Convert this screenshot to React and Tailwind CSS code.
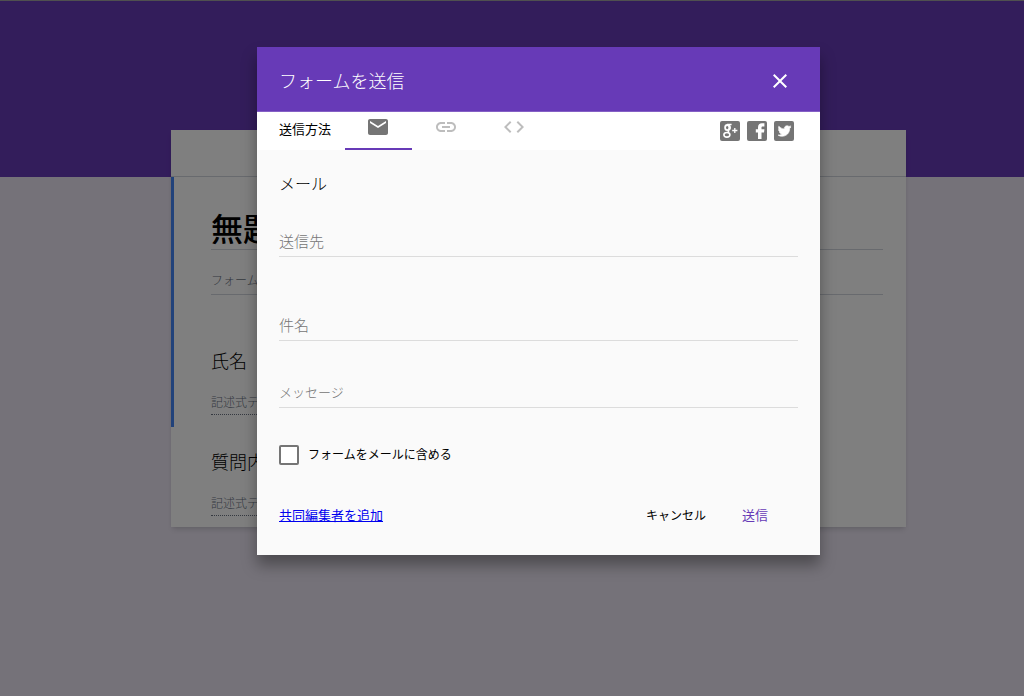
import { MdEmail, MdLink, MdCode, MdClose } from 'react-icons/md';

const GooglePlusIcon = () => (
  <svg viewBox="0 0 20 20" className="h-5 w-5">
    <rect width="20" height="20" rx="2" fill="#757575" />
    <g fill="none" stroke="#fff">
      <ellipse cx="7.2" cy="6.6" rx="2.1" ry="2.6" strokeWidth="1.8" />
      <path d="M7 3.4H11.6M9.2 4.4C10.8 6 10.4 7.8 9 8.9C7.8 9.8 8 10.4 9 11.2" strokeWidth="1.5" />
      <ellipse cx="6.9" cy="13.8" rx="3" ry="2.3" strokeWidth="1.6" />
      <path d="M14.8 6.9V12.1M12.2 9.5H17.4" strokeWidth="1.3" />
    </g>
  </svg>
);

const FacebookIcon = () => (
  <svg viewBox="0 0 20 20" className="h-5 w-5">
    <rect width="20" height="20" rx="2" fill="#757575" />
    <path
      d="M17.4 2.3V5.5H15.8C14.8 5.5 14.5 6 14.5 6.8V8.3H17.4L17 11.6H14.5V18H11V11.6H8.8V8.3H11V6.3C11 3.7 12.6 2.2 15 2.2Z"
      fill="#fff"
    />
  </svg>
);

const TwitterIcon = () => (
  <svg viewBox="2 2 20 20" className="h-5 w-5">
    <rect x="2" y="2" width="20" height="20" rx="2" fill="#757575" />
    <path
      d="M17.71 9.33C17.64 13.95 14.69 17.11 10.28 17.31C8.46 17.39 7.15 16.81 6 16.08C7.34 16.29 9 15.76 9.9 15C8.58 14.86 7.81 14.19 7.44 13.12C7.82 13.18 8.22 13.16 8.58 13.09C7.39 12.69 6.54 11.95 6.5 10.41C6.83 10.57 7.18 10.71 7.64 10.74C6.75 10.23 6.1 8.38 6.85 7.16C8.17 8.61 9.76 9.79 12.37 9.95C11.71 7.15 15.42 5.63 16.97 7.5C17.63 7.38 18.16 7.14 18.68 6.86C18.47 7.5 18.06 7.97 17.56 8.33C18.1 8.26 18.59 8.13 19 7.92C18.75 8.45 18.19 8.93 17.71 9.33Z"
      fill="#fff"
      stroke="#fff"
      strokeWidth="0.6"
    />
  </svg>
);

const Question = ({ title }) => (
  <div>
    <h2 className="text-lg leading-7">{title}</h2>
    <p className="mt-4 w-1/2 border-b border-dotted border-gray-500 text-xs leading-6 text-gray-500">
      記述式テキスト
    </p>
  </div>
);

const FormEditor = () => (
  <div className="min-h-screen border-t border-[#a0a0a0] bg-[#ebe5f3]">
    <div className="h-44 bg-[#673ab7]" />
    <div className="-mt-[47px] pl-[53px]">
      <main className="mx-auto w-full max-w-[735px] bg-white pb-[11px] shadow-md">
        <div className="h-[47px] border-b border-gray-300" />
        <div className="h-[250px] border-l-[3px] border-[#4285f4] pl-[37px] pr-[23px] pt-7">
          <h1 className="border-b border-gray-300 text-[32px] font-medium leading-[44px]">無題のフォーム</h1>
          <p className="mt-4 border-b border-gray-300 text-xs leading-7 text-gray-500">フォームの説明</p>
          <div className="pt-[51px]">
            <Question title="氏名" />
          </div>
        </div>
        <div className="pl-10 pr-[23px] pt-5">
          <Question title="質問内容" />
        </div>
      </main>
    </div>
  </div>
);

const Field = ({ label, className }) => (
  <input
    type="text"
    aria-label={label}
    placeholder={label}
    className={`block h-7 w-full border-b border-[#dcdcdc] bg-transparent pb-1 placeholder:text-[#757575] focus:outline-none ${className}`}
  />
);

const SendDialog = () => (
  <section
    role="dialog"
    aria-label="フォームを送信"
    className="mx-auto w-full max-w-[563px] bg-[#fafafa] shadow-[0_10px_14px_rgba(0,0,0,0.35)]"
  >
    <header className="flex h-[65px] items-center justify-between border-b border-[#8560c5] bg-[#673ab7] pl-[22px] pr-7 text-white">
      <h2 className="pt-0.5 text-lg">フォームを送信</h2>
      <button type="button" aria-label="閉じる" className="pt-1">
        <MdClose className="h-6 w-6" />
      </button>
    </header>

    {/* Send methods */}
    <div className="flex h-[38px] bg-white pl-[22px] pr-[26px]">
      <span className="w-[66px] pt-[7px] text-[13px] font-normal leading-5">送信方法</span>
      <div className="flex" role="tablist">
        <button
          type="button"
          role="tab"
          aria-label="メール"
          aria-selected="true"
          className="flex w-[67px] justify-center border-b-2 border-[#673ab7] pr-0.5 pt-[3px] text-[#757575]"
        >
          <MdEmail className="h-6 w-6" />
        </button>
        <button type="button" role="tab" aria-label="リンク" className="flex w-[68px] justify-center pt-[3px] text-[#bdbdbd]">
          <MdLink className="h-6 w-6" />
        </button>
        <button type="button" role="tab" aria-label="埋め込む" className="flex w-[68px] justify-center pt-[3px] text-[#bdbdbd]">
          <MdCode className="h-6 w-6" />
        </button>
      </div>
      <div className="ml-auto flex items-center gap-[7px]">
        <a href="#" aria-label="Google+"><GooglePlusIcon /></a>
        <a href="#" aria-label="Facebook"><FacebookIcon /></a>
        <a href="#" aria-label="Twitter"><TwitterIcon /></a>
      </div>
    </div>

    <form className="px-[22px] pb-6 pt-[21px]">
      <h3 className="text-base leading-6">メール</h3>
      <Field label="送信先" className="mt-[34px] text-[15px]" />
      <Field label="件名" className="mt-14 text-[15px]" />
      <Field label="メッセージ" className="mt-[39px] text-[13px]" />

      <label className="mt-[37px] flex items-center gap-[9px] text-xs font-normal">
        <input
          type="checkbox"
          className="h-5 w-5 appearance-none rounded-xs border-2 border-[#757575] bg-white checked:bg-[#673ab7]"
        />
        <span className="pb-0.5">フォームをメールに含める</span>
      </label>

      <div className="mt-[34px] flex items-center pr-[30px] font-normal">
        <a href="#" className="text-[13px] text-[#0000ee] underline">共同編集者を追加</a>
        <button type="button" className="ml-auto text-xs leading-8">キャンセル</button>
        <button type="button" className="ml-9 text-[13px] leading-8 text-[#673ab7]">送信</button>
      </div>
    </form>
  </section>
);

export default function App() {
  return (
    <div className="relative font-['Noto_Sans_CJK_JP',sans-serif] font-light text-black">
      <FormEditor />
      {/* Overlay */}
      <div className="absolute inset-0 bg-black/50 pl-[53px] pt-[47px]">
        <SendDialog />
      </div>
    </div>
  );
}
